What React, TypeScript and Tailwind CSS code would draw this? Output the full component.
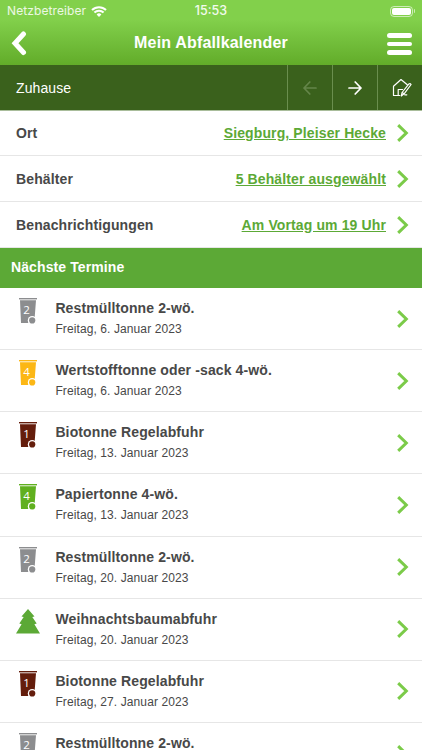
import React from 'react';

const settings = [
  { label: 'Ort', value: 'Siegburg, Pleiser Hecke', height: 'h-[45px]' },
  { label: 'Behälter', value: '5 Behälter ausgewählt', height: 'h-[46px]' },
  { label: 'Benachrichtigungen', value: 'Am Vortag um 19 Uhr', height: 'h-[46px]' },
];

type Termin = { title: string; date?: string; color?: string; count?: string };

const termine: Termin[] = [
  { title: 'Restmülltonne 2-wö.', date: 'Freitag, 6. Januar 2023', color: '#8c8d8f', count: '2' },
  { title: 'Wertstofftonne oder -sack 4-wö.', date: 'Freitag, 6. Januar 2023', color: '#fcb715', count: '4' },
  { title: 'Biotonne Regelabfuhr', date: 'Freitag, 13. Januar 2023', color: '#641d0c', count: '1' },
  { title: 'Papiertonne 4-wö.', date: 'Freitag, 13. Januar 2023', color: '#60b01f', count: '4' },
  { title: 'Restmülltonne 2-wö.', date: 'Freitag, 20. Januar 2023', color: '#8c8d8f', count: '2' },
  { title: 'Weihnachtsbaumabfuhr', date: 'Freitag, 20. Januar 2023' },
  { title: 'Biotonne Regelabfuhr', date: 'Freitag, 27. Januar 2023', color: '#641d0c', count: '1' },
  { title: 'Restmülltonne 2-wö.', color: '#8c8d8f', count: '2' },
];

function Chevron() {
  return (
    <svg className="h-[18px] w-[12px] shrink-0" viewBox="0 0 12 18" fill="none" stroke="#7bcb49" strokeWidth="3">
      <path d="M1.2 1.2 9.3 9 1.2 16.8" />
    </svg>
  );
}

function Bin({ color, count }: { color: string; count: string }) {
  return (
    <svg className="h-[26px] w-[18px]" viewBox="0 0 18 26">
      <path d="M0 0h18v1.4H0z" fill={color} />
      <path d="M1 2.2h16L15.6 20.5H9.5V25H2z" fill={color} />
      <circle cx="13.2" cy="22.4" r="4.4" fill="white" />
      <circle cx="13.2" cy="22.4" r="3.1" fill={color} />
      <text x="7.5" y="15.8" textAnchor="middle" fill="white" fontSize="11.5" fontFamily="'Open Sans', 'Noto Sans', sans-serif">
        {count}
      </text>
    </svg>
  );
}

function Tree() {
  return (
    <svg className="h-[25px] w-[24px]" viewBox="0 0 24 25" fill="#5ca936">
      <path d="M12 0 18.5 7.5 16.3 8 20.7 14.4 18.4 15.3 24 24.5H0L5.6 15.3 3.3 14.4 7.7 8 5.5 7.5z" />
    </svg>
  );
}

function Arrow({ flip }: { flip?: boolean }) {
  return (
    <svg
      className={flip ? 'h-[14px] w-[14px] rotate-180' : 'h-[14px] w-[14px]'}
      viewBox="0 0 14 14"
      fill="none"
      stroke={flip ? '#648549' : 'white'}
      strokeWidth="1.7"
      strokeLinecap="round"
      strokeLinejoin="round"
    >
      <path d="M1 7h12M7.2 1 13 7l-5.8 6" />
    </svg>
  );
}

function EditHome() {
  return (
    <svg className="h-[20px] w-[20px]" viewBox="0 0 20 20" fill="none" stroke="white" strokeWidth="1.2" strokeLinejoin="round" strokeLinecap="round">
      <path d="M7.8 17.5H1.5V8.3L9 1.5l6.3 5.3M6.2 17.3V11.5h4.3" />
      <path d="m9.3 18 .8-3.5 6.8-8.6q1.3-.8 2.2.6l-7 9.3zM10.1 14.5l2 1.3M14.8 16.8h-2" />
    </svg>
  );
}

export default function App() {
  return (
    <div className="flex h-[750px] w-[422px] flex-col overflow-hidden bg-white font-['Liberation_Sans',Arial,sans-serif] text-[#484848]">
      <header className="flex h-[65px] shrink-0 flex-col bg-linear-to-b from-[#82d04b] from-30% to-[#62ac29] text-white">
        <div className="grid h-[22px] grid-cols-3 items-center px-[7px] font-[Inter,sans-serif]">
          <div className="flex items-center gap-[5px] text-[12px] leading-none text-white/85">
            <span className="tracking-[0.1px]">Netzbetreiber</span>
            <svg className="h-[11px] w-[16px] shrink-0" viewBox="0 0 16 11" fill="none" stroke="white" strokeWidth="2">
              <path d="M1 4a10 10 0 0 1 14 0M3.4 6.5a6.6 6.6 0 0 1 9.2 0" />
              <path d="m8 11-2.4-2.5a3.4 3.4 0 0 1 4.8 0z" fill="white" stroke="none" />
            </svg>
          </div>
          <span className="pt-px text-center text-[12.5px] leading-none font-medium text-white/90">15:53</span>
          <div className="flex items-center justify-end gap-px">
            <div className="h-[11px] w-[23px] rounded-[4px] border border-white/60 p-px">
              <div className="h-full rounded-[2px] bg-white" />
            </div>
            <div className="h-[4px] w-px rounded-r bg-white/60" />
          </div>
        </div>
        <div className="grid h-[43px] grid-cols-[60px_1fr_60px] items-center">
          <svg className="ml-[11px] h-[25px] w-[16px]" viewBox="0 0 16 25" fill="none" stroke="white" strokeWidth="5" strokeLinecap="round" strokeLinejoin="miter">
            <path d="M12.5 3 4 12.2l8.5 9.3" />
          </svg>
          <h1 className="pb-[2px] text-center text-[16px] leading-none font-bold tracking-[0.17px]">Mein Abfallkalender</h1>
          <div className="flex flex-col gap-[4px] justify-self-end pr-[10px]">
            <span className="h-[5px] w-[25px] rounded-full bg-white" />
            <span className="h-[4px] w-[25px] rounded-full bg-white" />
            <span className="h-[5px] w-[25px] rounded-full bg-white" />
          </div>
        </div>
      </header>

      <nav className="flex h-[46px] shrink-0 border-b border-[#a9bd9b] bg-[#3a611c] text-white">
        <span className="flex flex-1 items-center pt-[2px] pl-[16px] text-[14px] tracking-[0.1px]">Zuhause</span>
        <button className="flex w-[45px] items-center justify-center border-l border-[#6a8e4e] pt-px"><Arrow flip /></button>
        <button className="flex w-[45px] items-center justify-center border-l border-[#6a8e4e] pt-px"><Arrow /></button>
        <button className="flex w-[45px] items-center justify-center border-l border-[#6a8e4e] pl-[3px]"><EditHome /></button>
      </nav>

      <section className="shrink-0">
        {settings.map((s) => (
          <div key={s.label} className={`flex ${s.height} items-center border-b border-[#e6e6e6] pr-[13px] pl-[16px] text-[14px] font-bold tracking-[0.12px]`}>
            <span className="flex-1 pt-px">{s.label}</span>
            <span className="mr-[11px] pt-px text-[#5ca936] underline">{s.value}</span>
            <Chevron />
          </div>
        ))}
      </section>

      <h2 className="flex h-[40px] shrink-0 items-center bg-[#5ca936] pb-[2px] pl-[11px] text-[14px] font-bold tracking-[0.1px] text-white">Nächste Termine</h2>

      <ul className="shrink-0">
        {termine.map((t, i) => (
          <li key={i} className="flex h-[62.15px] border-b border-[#e6e6e6] pr-[13px]">
            <div className="flex w-[55px] justify-center pt-[10px]">
              {t.color && t.count ? <Bin color={t.color} count={t.count} /> : <Tree />}
            </div>
            <div className="flex-1 pt-[11px] pl-[0.4px]">
              <div className="text-[14px] leading-[18px] font-bold tracking-[0.12px]">{t.title}</div>
              {t.date && <div className="mt-[4px] text-[12px] leading-[16px] tracking-[0.1px]">{t.date}</div>}
            </div>
            <div className="flex items-center"><Chevron /></div>
          </li>
        ))}
      </ul>
    </div>
  );
}
